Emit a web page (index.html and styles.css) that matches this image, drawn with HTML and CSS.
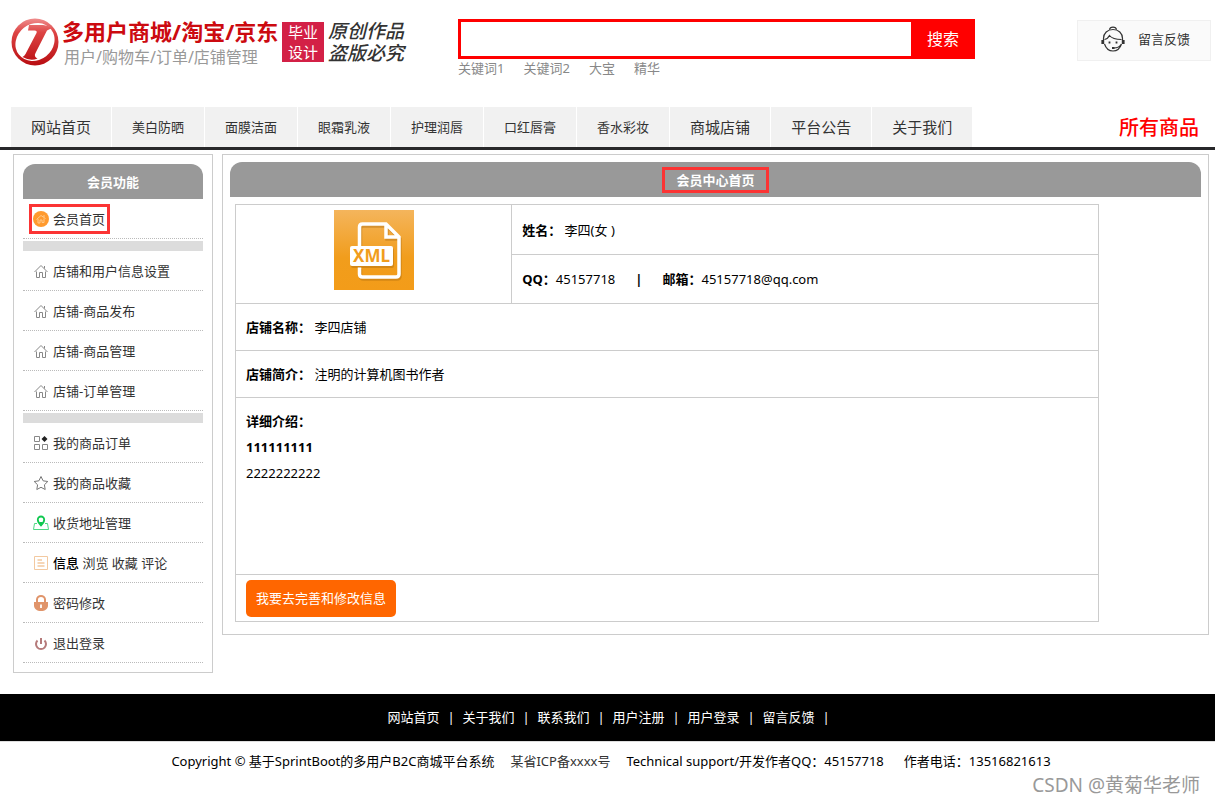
FILE: index.html
```html
<!DOCTYPE html>
<html lang="zh-CN">
<head>
<meta charset="utf-8">
<title>会员中心首页</title>
<link rel="stylesheet" href="styles.css">
</head>
<body>
<svg class="defs" aria-hidden="true">
  <symbol id="house" viewBox="0 0 16 16"><path d="M1.500 9 8 2.500 14.500 9M3.500 8.500v6h3v-5h3v5h3v-6M11.500 3v2.500" fill="none" stroke="#888"/></symbol>
</svg>
<header class="header">
  <div class="logo">
    <svg class="logo-mark" viewBox="0 0 48 48" aria-hidden="true">
      <defs><linearGradient id="red" gradientUnits="userSpaceOnUse" x1="0" y1="0" x2="0" y2="48"><stop offset="0" stop-color="#f09090"/><stop offset=".3" stop-color="#dd4444"/><stop offset="1" stop-color="#b80c10"/></linearGradient></defs>
      <circle cx="24" cy="24" r="23.500" fill="url(#red)"/>
      <ellipse cx="24" cy="24" rx="20.500" ry="18" transform="rotate(-38 24 24)" fill="#fff"/>
      <path d="M17 12.500 18 7h14q4 0 9 3l-5 2.500L24.500 35q-2 3.500 2 5.500-7 3-15-1.500 2-1 3-3l11-21q1-2.500-2-2.500z" fill="url(#red)"/>
    </svg>
    <div class="logo-text">
      <strong class="logo-title">多用户商城/淘宝/京东</strong>
      <span class="logo-sub">用户/购物车/订单/店铺管理</span>
    </div>
    <div class="stamp">毕业<br>设计</div>
    <div class="motto">原创作品<br>盗版必究</div>
  </div>
  <div class="search">
    <form class="search-form">
      <input class="search-input" type="text" aria-label="搜索商品">
      <button class="search-button" type="button">搜索</button>
    </form>
    <div class="keywords"><a href="#">关键词1</a><a href="#">关键词2</a><a href="#">大宝</a><a href="#">精华</a></div>
  </div>
  <a class="feedback" href="#">
    <svg class="feedback-icon" viewBox="0 0 24 26" fill="none" stroke="#333" stroke-width="1.200" aria-hidden="true">
      <path d="M8.500 3.500C9 .2 15 .2 15.500 3.500M2.500 14V12.500C2.500 7 6.500 3.500 12 3.500S21.500 7 21.500 12.500V14M3.500 13.500C6 13 7.500 11.500 8.500 9.500c2 2.500 6 4 12 4M3.500 18c1.500 4.500 4.500 7 8.500 7s7-2.500 8.500-7M20 18.500c-1.500 2.500-4 3.500-7 3.500"/>
      <path d="M1.800 14v4M22.200 14v4" stroke-width="2.800"/>
      <path d="M8.500 15.500v2M15.500 15.500v2M11 22h2.500" stroke-width="1.800"/>
    </svg>
    留言反馈
  </a>
</header>

<nav class="nav">
  <a class="nav-item nav-main" href="#">网站首页</a>
  <a class="nav-item" href="#">美白防晒</a>
  <a class="nav-item" href="#">面膜洁面</a>
  <a class="nav-item" href="#">眼霜乳液</a>
  <a class="nav-item" href="#">护理润唇</a>
  <a class="nav-item" href="#">口红唇膏</a>
  <a class="nav-item" href="#">香水彩妆</a>
  <a class="nav-item nav-main" href="#">商城店铺</a>
  <a class="nav-item nav-main" href="#">平台公告</a>
  <a class="nav-item nav-main" href="#">关于我们</a>
  <a class="nav-all" href="#">所有商品</a>
</nav>

<div class="page">
  <aside class="side">
    <h2 class="bar-title">会员功能</h2>
    <ul class="menu">
      <li><a class="marked" href="#"><svg viewBox="0 0 16 16"><circle cx="8" cy="8" r="8" fill="#ff9a2e"/><path d="M3.500 8.500 8 4.500l4.500 3M5 8v4h2V9h2v2.500h2V7.500M11 4v2" fill="none" stroke="#ffc98a"/></svg>会员首页</a></li>
    </ul>
    <ul class="menu">
      <li><a href="#"><svg><use href="#house"/></svg>店铺和用户信息设置</a></li>
      <li><a href="#"><svg><use href="#house"/></svg>店铺-商品发布</a></li>
      <li><a href="#"><svg><use href="#house"/></svg>店铺-商品管理</a></li>
      <li><a href="#"><svg><use href="#house"/></svg>店铺-订单管理</a></li>
    </ul>
    <ul class="menu">
      <li><a href="#"><svg viewBox="0 0 16 16"><path d="M1.500 1.500h5v5h-5zM1.500 9.500h5v5h-5zM9.500 9.500h5v5h-5z" fill="none" stroke="#888"/><path d="m11.500 1 3 3-3 3-3-3z" fill="#222"/></svg>我的商品订单</a></li>
      <li><a href="#"><svg viewBox="0 0 16 16"><path d="m8 1.500 2.100 4.300 4.700.7-3.400 3.300.8 4.700L8 12.300l-4.200 2.200.8-4.700L1.200 6.500l4.700-.7z" fill="none" stroke="#777" stroke-linejoin="round"/></svg>我的商品收藏</a></li>
      <li><a href="#"><svg viewBox="0 0 16 16"><path d="M4 8.500H1.500l-1 6h15l-1-6H12" fill="none" stroke="#4fd884"/><path d="M8 1.500a3.200 3.200 0 0 0-3.200 3.200C4.800 7 8 10.500 8 10.500s3.200-3.500 3.200-5.800A3.200 3.200 0 0 0 8 1.500z" fill="#fff" stroke="#10c850" stroke-width="1.800"/><path d="m6 7 2 4 2-4z" fill="#10c850"/></svg>收货地址管理</a></li>
      <li><a href="#"><svg viewBox="0 0 16 16" fill="none" stroke="#f3c9a0"><path d="M1.500 1.500h13v13h-13z"/><path d="M4.500 5H9M4.500 8h7M4.500 11h7" stroke-width="1.500"/></svg><span><b>信息</b> 浏览 收藏 评论</span></a></li>
      <li><a href="#"><svg viewBox="0 0 16 16"><path d="M4 8V4.500a4 3.500 0 0 1 8 0V8" fill="none" stroke="#e0946a" stroke-width="2"/><path d="M1 7h14v3.500C15 14 12 16 8 16s-7-2-7-5.500z" fill="#e0946a"/><path d="M8 9.500v3.500" stroke="#fff" stroke-width="1.800"/></svg>密码修改</a></li>
      <li><a href="#"><svg viewBox="0 0 16 16" fill="none" stroke="#b57a7a" stroke-width="2"><path d="M4.500 5.500a5 5 0 1 0 7 0M8 3v6"/></svg>退出登录</a></li>
    </ul>
  </aside>

  <main class="content">
    <h1 class="bar-title"><span class="title-mark">会员中心首页</span></h1>
    <table class="info">
      <colgroup><col class="col-photo"><col></colgroup>
      <tr class="row-name">
        <td class="photo" rowspan="2">
          <svg viewBox="0 0 80 80" role="img" aria-label="XML">
            <defs><linearGradient id="amber" x1="0" y1="0" x2="0" y2="1"><stop offset="0" stop-color="#f4b55c"/><stop offset=".6" stop-color="#f19d1c"/><stop offset="1" stop-color="#f39c19"/></linearGradient></defs>
            <path fill="url(#amber)" d="M0 0h80v80H0z"/>
            <path d="M25.500 37V17q0-3 3-3H52l13 13v37q0 3-3 3H28.500q-3 0-3-3v-7M52 14v13h13" fill="none" stroke="#a86a10" stroke-opacity=".4" stroke-width="3.500" transform="translate(1 2)"/>
            <path d="M25.500 37V17q0-3 3-3H52l13 13v37q0 3-3 3H28.500q-3 0-3-3v-7M52 14v13h13" fill="none" stroke="#fff" stroke-width="3.500"/>
            <rect x="17" y="38" width="43" height="20" rx="2" fill="#a86a10" fill-opacity=".4"/>
            <rect x="16" y="36" width="43" height="20" rx="2" fill="#fff"/>
            <text class="xml" x="37.500" y="52" text-anchor="middle">XML</text>
          </svg>
        </td>
        <td><b>姓名：</b> 李四(女 )</td>
      </tr>
      <tr class="row-contact"><td><div class="contact"><span><b>QQ：</b>45157718</span><b>|</b><span><b>邮箱：</b>45157718@qq.com</span></div></td></tr>
      <tr><td colspan="2"><b>店铺名称：</b> 李四店铺</td></tr>
      <tr><td colspan="2"><b>店铺简介：</b> 注明的计算机图书作者</td></tr>
      <tr class="row-detail"><td colspan="2"><b>详细介绍：</b><br><b>111111111</b><br>2222222222</td></tr>
      <tr><td class="actions" colspan="2"><button class="edit-button" type="button">我要去完善和修改信息</button></td></tr>
    </table>
  </main>
</div>

<footer class="footer">
  <div class="footer-links">
    <a href="#">网站首页</a><span>|</span><a href="#">关于我们</a><span>|</span><a href="#">联系我们</a><span>|</span><a href="#">用户注册</a><span>|</span><a href="#">用户登录</a><span>|</span><a href="#">留言反馈</a><span>|</span>
  </div>
  <div class="copyright">
    <span>Copyright © 基于SprintBoot的多用户B2C商城平台系统</span>
    <a href="#">某省ICP备xxxx号</a>
    <span>Technical support/开发作者QQ：45157718</span>
    <span class="phone">作者电话：13516821613</span>
  </div>
  <div class="credit">CSDN @黄菊华老师</div>
</footer>
</body>
</html>
```
FILE: styles.css
```css
* { box-sizing: border-box; }
body {
  margin: 0;
  background: #fff;
  color: #000;
  font: 13px/20px "Noto Sans", "Noto Sans CJK SC", sans-serif;
}
a { color: #333; text-decoration: none; }
button, input { font: inherit; border: 0; margin: 0; padding: 0; }
button { cursor: pointer; }
.defs { display: none; }

.header {
  display: flex;
  align-items: flex-start;
  height: 107px;
  padding: 18px 4px 0 11px;
}
.logo { display: flex; flex: 0 0 447px; align-items: flex-start; }
.logo-mark { width: 48px; height: 48px; margin-right: 3px; }
.logo-text { display: flex; flex-direction: column; width: 217px; white-space: nowrap; }
.logo-title { color: #cc0a10; font-size: 22px; line-height: 26px; }
.logo-sub { padding-left: 2px; color: #999; font-size: 16px; line-height: 26px; }
.stamp {
  width: 42px;
  margin: 4px 4px 0 3px;
  color: #fff;
  background: #d32046;
  font-size: 15px;
  text-align: center;
}
.motto {
  margin-top: 3px;
  color: #333;
  font: italic 500 19px/22px "Liberation Sans", "Noto Sans CJK SC", sans-serif;
}
.search { flex: 0 1 517px; padding-top: 1px; }
.search-form { display: flex; height: 40px; }
.search-input { flex: 1; min-width: 0; padding: 0 8px; border: 3px solid #f00; border-right: 0; outline: 0; }
.search-button { width: 64px; color: #fff; background: #f00; font-size: 16px; }
.keywords { display: flex; gap: 19px; line-height: 18px; }
.keywords a { color: #888; }
.feedback {
  display: flex;
  align-items: center;
  gap: 13px;
  width: 134px;
  height: 41px;
  margin: 2px 0 0 auto;
  padding: 0 0 4px 23px;
  background: #fafafa;
  border: 1px solid #f0f0f0;
}
.feedback-icon { width: 24px; height: 26px; }

.nav { display: flex; gap: 1px; height: 43px; padding: 0 16px 0 11px; border-bottom: 3px solid #28282a; }
.nav-item { padding: 0 20px; background: #f1f1f1; line-height: 40px; white-space: nowrap; }
.nav-main { font-size: 15px; }
.nav-all { margin-left: auto; color: #f00; font-size: 20px; font-weight: 500; line-height: 41px; }

.page { display: flex; align-items: flex-start; gap: 9px; padding: 4px 6px 21px 13px; }
.side { flex: 0 0 200px; padding: 9px; border: 1px solid #ccc; }
.bar-title {
  display: flex;
  align-items: center;
  justify-content: center;
  height: 35px;
  margin: 0;
  color: #fff;
  background: #999;
  border-radius: 12px 12px 0 0;
  font-size: 13px;
}
.menu { margin: 0; padding: 0; list-style: none; }
.menu + .menu { margin-top: 2px; border-top: 10px solid #dcdcdc; }
.menu li { display: flex; align-items: center; height: 40px; padding-left: 6px; border-bottom: 1px dotted #bbb; }
.menu a { display: flex; align-items: center; gap: 4px; height: 30px; padding: 0 2px 0 1px; border: 3px solid transparent; }
.menu .marked { border-color: #fb3434; }
.menu svg { width: 16px; height: 16px; }
.menu b { color: #000; font-weight: 500; }

.content { flex: 1; min-width: 0; padding: 7px 7px 12px; border: 1px solid #ccc; }
.title-mark { height: 26px; padding: 0 11px; border: 3px solid #fb3434; line-height: 20px; }
.info { width: 89%; margin: 7px 0 0 5px; border-collapse: collapse; table-layout: fixed; }
.info td { height: 47px; padding: 0 10px; border: 1px solid #ccc; line-height: 26px; }
.col-photo { width: 32%; }
.info .row-name td { height: 50px; }
.info .row-contact td { height: 49px; }
.info .photo { text-align: center; vertical-align: top; padding-top: 5px; }
.photo svg { display: block; width: 80px; height: 80px; margin: 0 auto; }
.xml { fill: #f19d1c; font: 700 17px "Noto Sans", sans-serif; }
.contact { display: flex; gap: 20px; }
.info .row-detail td { height: 177px; padding-top: 10px; vertical-align: top; }
.info .actions { line-height: 20px; }
.edit-button { display: block; height: 37px; padding: 0 10px; color: #fff; background: #f60; border-radius: 5px; }

.footer-links {
  display: flex;
  justify-content: center;
  gap: 8px;
  padding: 13px 0 14px 2px;
  color: #fff;
  background: #000;
  border-bottom: 1px solid #ddd;
}
.footer-links a { color: #fff; }
.footer-links span { width: 7px; }
.copyright { display: flex; justify-content: center; gap: 16px; padding: 9px 0 4px 7px; white-space: nowrap; }
.phone { padding-left: 4px; }
.credit { padding-right: 15px; color: #999; font-size: 19px; text-align: right; }
```
